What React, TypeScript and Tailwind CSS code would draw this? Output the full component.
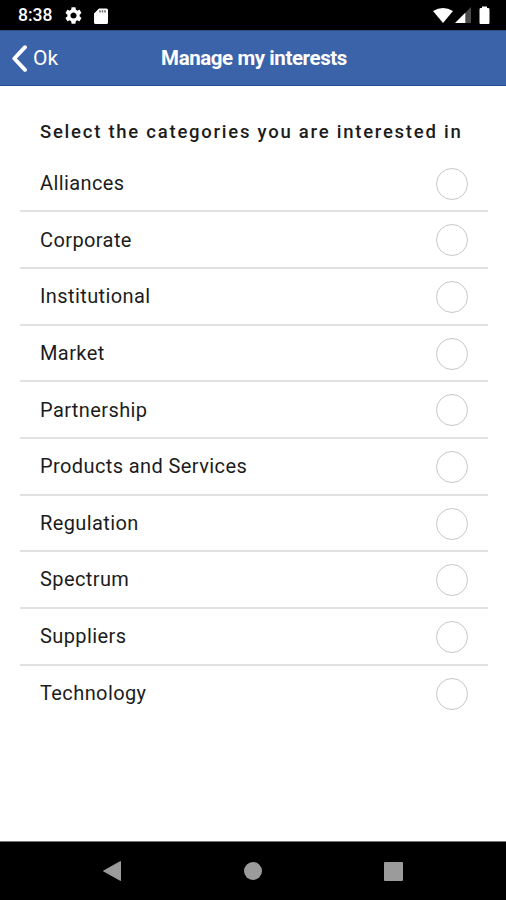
import { useState } from "react";

const categories = [
  "Alliances",
  "Corporate",
  "Institutional",
  "Market",
  "Partnership",
  "Products and Services",
  "Regulation",
  "Spectrum",
  "Suppliers",
  "Technology",
];

const StatusBar = () => (
  <div className="flex h-[30px] shrink-0 items-center justify-between bg-black pl-[18px] pr-[16px] text-white">
    <div className="flex items-center pt-px">
      <span className="w-[47px] text-[17.5px] leading-[29px] font-medium">8:38</span>
      <svg className="h-[17px] w-[17px]" viewBox="2 2 20 20" fill="currentColor">
        <path d="M19.14 12.94c.04-.3.06-.61.06-.94 0-.32-.02-.64-.07-.94l2.03-1.58c.18-.14.23-.41.12-.61l-1.92-3.32c-.12-.22-.37-.29-.59-.22l-2.39.96c-.5-.38-1.03-.7-1.62-.94l-.36-2.54c-.04-.24-.24-.41-.48-.41h-3.84c-.24 0-.43.17-.47.41l-.36 2.54c-.59.24-1.13.57-1.62.94l-2.39-.96c-.22-.08-.47 0-.59.22L2.74 8.87c-.12.21-.08.47.12.61l2.03 1.58c-.05.3-.09.63-.09.94s.02.64.07.94l-2.03 1.58c-.18.14-.23.41-.12.61l1.92 3.32c.12.22.37.29.59.22l2.39-.96c.5.38 1.03.7 1.62.94l.36 2.54c.05.24.24.41.48.41h3.84c.24 0 .44-.17.47-.41l.36-2.54c.59-.24 1.13-.56 1.62-.94l2.39.96c.22.08.47 0 .59-.22l1.92-3.32c.12-.22.07-.47-.12-.61l-2.01-1.58zM12 15.6c-1.98 0-3.6-1.62-3.6-3.6s1.62-3.6 3.6-3.6 3.6 1.62 3.6 3.6-1.62 3.6-3.6 3.6z" />
      </svg>
      <svg className="ml-[12px] h-4 w-[14px]" viewBox="0 0 14 16">
        <path d="M5 .5h7.5A1.5 1.5 0 0 1 14 2v12.5a1.5 1.5 0 0 1-1.5 1.5h-11A1.5 1.5 0 0 1 0 14.5V5.5z" fill="white" />
        <path d="M6 2.2v2.3M8.5 2.2v2.3M11 2.2v2.3" stroke="#666" strokeWidth="1.5" />
      </svg>
    </div>
    <div className="flex items-center">
      <svg className="h-4 w-5" viewBox="0 0 20 16" fill="currentColor">
        <path d="M0 4Q10-2 20 4L10 16z" />
      </svg>
      <svg className="ml-[2px] h-4 w-4" viewBox="0 0 16 16">
        <path d="M16 0v16h-5V5z" fill="#4a4a4a" />
        <path d="M0 16 10.5 5.5V16z" fill="white" />
      </svg>
      <svg className="ml-[8px] h-[18px] w-[11px]" viewBox="0 0 11 18" fill="currentColor">
        <path d="M3 .5h5V2h1.500Q10.500 2 10.500 3.500v13Q10.500 18 9.500 18h-8Q.5 18 .5 16.500v-13Q.5 2 1.500 2H3z" />
      </svg>
    </div>
  </div>
);

const Header = () => (
  <header className="grid h-14 shrink-0 grid-cols-[1fr_auto_1fr] items-center border-t border-b border-t-[#2c4f88] border-b-[#245098] bg-[#3b63aa] text-white">
    <button className="flex items-center pl-[12px]">
      <svg className="h-[27px] w-[16px]" viewBox="0 0 16 27" fill="none" stroke="white" strokeWidth="3.9">
        <path d="M13 2.2 2.3 13.5 13 24.8" strokeLinecap="round" strokeLinejoin="round" />
      </svg>
      <span className="ml-[5px] pb-px text-[21px] leading-6">Ok</span>
    </button>
    <h1 className="pb-px pl-[2px] text-[20.5px] leading-6 font-bold tracking-[-0.42px]">Manage my interests</h1>
  </header>
);

interface RowProps {
  label: string;
  checked: boolean;
  last: boolean;
  onToggle: () => void;
}

const CategoryRow = ({ label, checked, last, onToggle }: RowProps) => (
  <li className={last ? "h-[56.65px]" : "h-[56.65px] border-b-2 border-[#e1e1e1]"}>
    <button
      className="flex h-[56px] w-full items-center justify-between pr-5 pl-5 text-left"
      role="checkbox"
      aria-checked={checked}
      onClick={onToggle}
    >
      <span className="pb-[1.6px] text-[20px] leading-6 tracking-[0.4px]">{label}</span>
      <span
        className={
          checked
            ? "h-8 w-8 rounded-full border border-[#3b63aa] bg-[#3b63aa]"
            : "h-8 w-8 rounded-full border border-[#c8c8c8]"
        }
      />
    </button>
  </li>
);

const NavigationBar = () => (
  <nav className="grid h-[59px] shrink-0 grid-cols-3 items-center border-t border-[#777] bg-black px-[42px]">
    <svg className="h-[22px] w-[20px] justify-self-center" viewBox="0 0 20 22">
      <path d="M1.5 11 18.5 1.5v19z" fill="#9b9b9b" stroke="#9b9b9b" strokeLinejoin="round" />
    </svg>
    <span className="h-[18px] w-[18px] justify-self-center rounded-full bg-[#9b9b9b]" />
    <span className="h-[19px] w-[19px] justify-self-center rounded-[1px] bg-[#9b9b9b]" />
  </nav>
);

export default function App() {
  const [selected, setSelected] = useState<string[]>([]);

  const toggle = (name: string) => {
    setSelected((prev) =>
      prev.includes(name) ? prev.filter((item) => item !== name) : [...prev, name]
    );
  };

  return (
    <div className="flex h-[900px] w-[506px] flex-col bg-white font-[Roboto,sans-serif] text-[#1c1c1c]">
      <StatusBar />
      <Header />
      <main className="flex-1 pt-[34px] pr-[18px] pl-5">
        <h2 className="pl-5 text-[18.5px] leading-6 font-medium tracking-[1.75px] whitespace-nowrap">
          Select the categories you are interested in
        </h2>
        <ul className="mt-[11.8px]">
          {categories.map((name, i) => (
            <CategoryRow
              key={name}
              label={name}
              checked={selected.includes(name)}
              last={i === categories.length - 1}
              onToggle={() => toggle(name)}
            />
          ))}
        </ul>
      </main>
      <NavigationBar />
    </div>
  );
}
